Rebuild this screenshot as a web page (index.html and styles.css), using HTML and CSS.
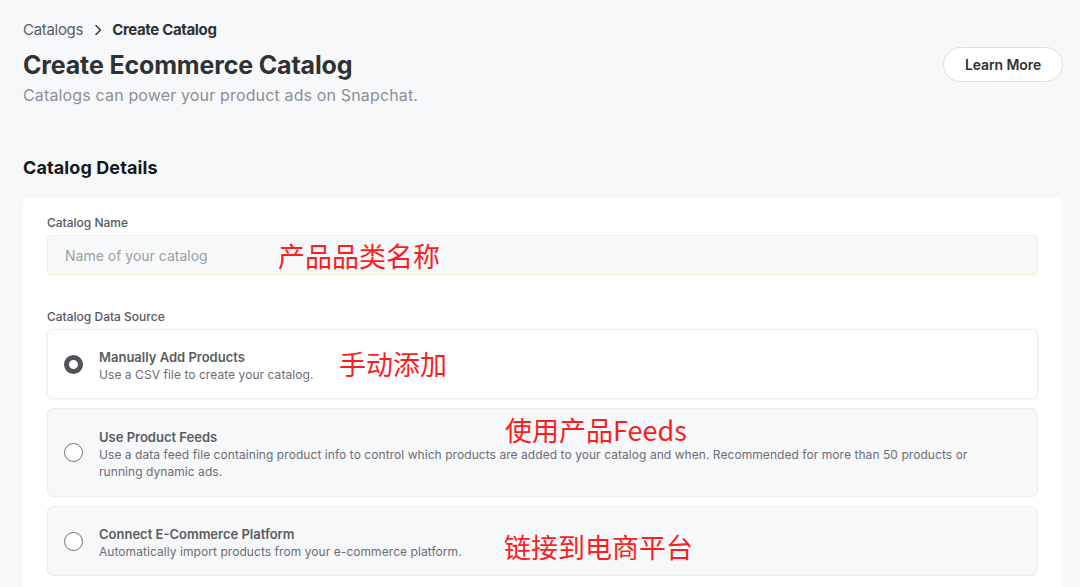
FILE: index.html
```html
<!DOCTYPE html>
<html lang="en">
<head>
<meta charset="utf-8">
<title>Create Ecommerce Catalog</title>
<link rel="stylesheet" href="styles.css">
</head>
<body>
<div class="page">
  <nav class="crumbs">
    <span class="crumb">Catalogs</span>
    <svg class="chev" width="10" height="12" viewBox="0 0 10 12"><path d="M3 1.5 L7.5 6 L3 10.5" fill="none" stroke="#3a3d40" stroke-width="1.6" stroke-linecap="round" stroke-linejoin="round"/></svg>
    <span class="crumb current">Create Catalog</span>
  </nav>
  <header class="head">
    <div>
      <h1 class="title">Create Ecommerce Catalog</h1>
      <p class="subtitle">Catalogs can power your product ads on Snapchat.</p>
    </div>
    <button class="learn">Learn More</button>
  </header>

  <h2 class="section">Catalog Details</h2>

  <section class="card">
    <label class="label">Catalog Name</label>
    <div class="input">
      <span class="placeholder">Name of your catalog</span>
      <span class="note n1">产品品类名称</span>
    </div>

    <label class="label label-src">Catalog Data Source</label>
    <div class="options">
      <div class="option selected">
        <span class="radio on"></span>
        <div class="otext">
          <div class="otitle">Manually Add Products</div>
          <div class="odesc">Use a CSV file to create your catalog.</div>
        </div>
        <span class="note n2">手动添加</span>
      </div>
      <div class="option tall">
        <span class="radio"></span>
        <div class="otext">
          <div class="otitle">Use Product Feeds</div>
          <div class="odesc">Use a data feed file containing product info to control which products are added to your catalog and when. Recommended for more than 50 products or running dynamic ads.</div>
        </div>
        <span class="note n3">使用产品Feeds</span>
      </div>
      <div class="option">
        <span class="radio"></span>
        <div class="otext">
          <div class="otitle">Connect E-Commerce Platform</div>
          <div class="odesc">Automatically import products from your e-commerce platform.</div>
        </div>
        <span class="note n4">链接到电商平台</span>
      </div>
    </div>
  </section>
</div>
</body>
</html>
```

FILE: styles.css
```css
* { box-sizing: border-box; }
html, body { margin: 0; padding: 0; }
body {
  background: #f7f8fa;
  font-family: Inter, "Noto Sans", "Noto Sans CJK SC", sans-serif;
  color: #2f3235;
  overflow: hidden;
}
.page {
  padding: 20px 17px 0 23px;
}
.crumbs {
  display: flex;
  align-items: center;
  gap: 9px;
  height: 20px;
  font-size: 15px;
  line-height: 20px;
}
.crumb { color: #5a5e63; letter-spacing: -0.3px; }
.crumb.current { color: #2f3235; font-weight: 700; letter-spacing: -0.35px; }
.chev { margin-left: 1px; }
.head {
  display: flex;
  justify-content: space-between;
  align-items: flex-start;
}
.title {
  margin: 10px 0 0;
  font-size: 25px;
  line-height: 30px;
  font-weight: 700;
  letter-spacing: -0.15px;
  color: #2f3235;
}
.subtitle {
  margin: 4px 0 0;
  font-size: 16px;
  line-height: 22px;
  color: #8b9095;
  letter-spacing: 0.15px;
}
.learn {
  margin-top: 7px;
  width: 120px;
  height: 35px;
  border-radius: 18px;
  border: 1px solid #dcdee1;
  background: #fff;
  font-family: inherit;
  font-size: 14px;
  font-weight: 600;
  color: #2f3235;
  letter-spacing: -0.1px;
}
.section {
  margin: 50px 0 0;
  font-size: 18px;
  line-height: 24px;
  font-weight: 700;
  color: #16181a;
  letter-spacing: 0.1px;
}
.card {
  margin-top: 18px;
  background: #fff;
  border-radius: 7px;
  padding: 17px 25px 20px 24px;
  min-height: 400px;
}
.label {
  display: block;
  font-size: 12px;
  line-height: 16px;
  color: #55595e;
  font-weight: 500;
}
.input {
  position: relative;
  margin-top: 4px;
  height: 40px;
  background: #f7f8fa;
  border: 1px solid #f8ecd3;
  border-radius: 4px;
  padding-left: 17px;
  display: flex;
  align-items: center;
}
.placeholder {
  font-size: 14px;
  color: #9a9fa4;
}
.label-src { margin-top: 34px; }
.options {
  margin-top: 4px;
  display: flex;
  flex-direction: column;
  gap: 9px;
}
.option {
  position: relative;
  display: flex;
  align-items: center;
  gap: 16px;
  min-height: 70px;
  padding: 8px 40px 8px 16px;
  border: 1px solid #eceef0;
  border-radius: 6px;
  background: #f7f8fa;
}
.option.tall { min-height: 89px; }
.option.selected {
  background: #fff;
  box-shadow: 0 1px 3px rgba(0,0,0,0.05);
}
.radio {
  flex: none;
  width: 19px;
  height: 19px;
  border-radius: 50%;
  border: 1.5px solid #707478;
  background: #fff;
}
.radio.on {
  border: 5px solid #505357;
}
.otext { flex: 1; padding-top: 3px; }
.otitle {
  font-size: 13px;
  line-height: 18px;
  font-weight: 600;
  color: #595d61;
}
.odesc {
  font-size: 12px;
  line-height: 17px;
  color: #6a6e72;
  letter-spacing: 0.06px;
}
.note {
  position: absolute;
  font-family: "Noto Sans CJK SC", "Noto Sans", sans-serif;
  font-size: 27px;
  line-height: 24px;
  color: #fa1e1e;
  white-space: nowrap;
  font-weight: 400;
}
.n1 { left: 230px; top: 8px; }
.n2 { left: 291px; top: 22px; }
.n3 { left: 457px; top: 9px; }
.n4 { left: 456px; top: 28px; }
```
